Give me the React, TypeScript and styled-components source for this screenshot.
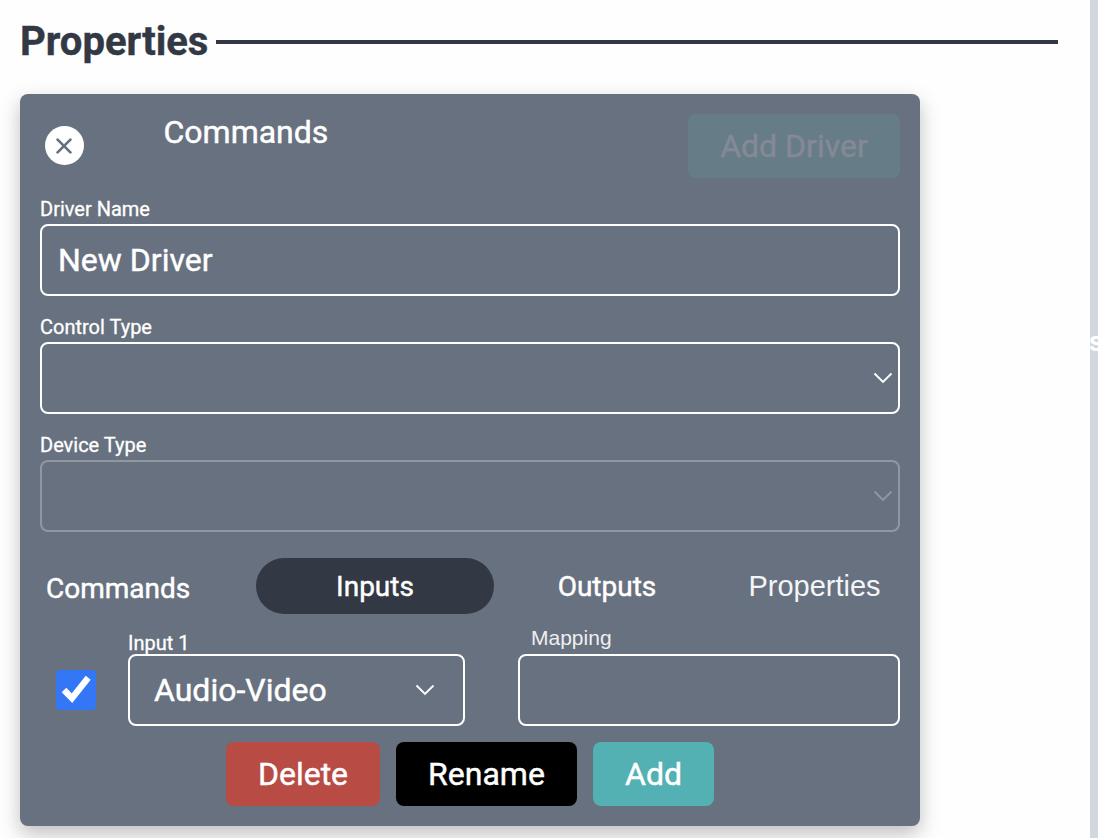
import React from "react";
import styled, { createGlobalStyle, css } from "styled-components";

const roboto = `Roboto, "Liberation Sans", sans-serif`;
const arial = `"Liberation Sans", Arial, sans-serif`;

const GlobalStyle = createGlobalStyle`
  *, *::before, *::after { box-sizing: border-box; }
  body {
    margin: 0;
    overflow: hidden;
    background: #fefefe;
    font-family: ${roboto};
    font-weight: 400;
  }
  button, input { font-family: inherit; margin: 0; }
`;

const Page = styled.div`
  display: flex;
  width: 100vw;
  height: 100vh;
  overflow: hidden;
`;

const Main = styled.main`
  flex: 1;
  min-width: 0;
  padding: 18px 32px 0 20px;
`;

const SidePanel = styled.aside`
  flex: none;
  width: 8px;
  padding-top: 328px;
  overflow: hidden;
  background: #d2d7df;
  color: #fff;
  font: 700 28px/28px ${roboto};
  text-indent: -1px;
  white-space: nowrap;
`;

const Heading = styled.h1`
  display: flex;
  align-items: center;
  gap: 8px;
  height: 48px;
  margin: 0 0 28px;
  color: #323844;
  font-size: 40px;
  font-weight: 700;
  line-height: 48px;
  -webkit-text-stroke: 0.4px currentColor;

  span { width: 188px; white-space: nowrap; }

  &::after {
    content: "";
    flex: 1;
    height: 4px;
    background: #323844;
  }
`;

const Card = styled.section`
  width: 900px;
  height: 732px;
  padding: 20px;
  border-radius: 8px;
  background: #68717f;
  box-shadow: 0 8px 20px rgba(0, 0, 0, 0.25);
  color: #fff;
  -webkit-text-stroke: 0.45px currentColor;
`;

const Header = styled.header`
  display: flex;
  align-items: flex-start;
  height: 64px;
`;

const CloseButton = styled.button`
  display: flex;
  align-items: center;
  justify-content: center;
  width: 39px;
  height: 39px;
  margin: 12px 80px 0 4.5px;
  padding: 0;
  border: 0;
  border-radius: 50%;
  background: #fff;
`;

const Title = styled.h2`
  flex: 1;
  margin: 0;
  font-size: 32px;
  font-weight: 400;
  line-height: 36px;
`;

const Button = styled.button<{ $bg: string; $width: number }>`
  width: ${(p) => p.$width}px;
  height: 64px;
  padding: 0 0 1px;
  border: 0;
  border-radius: 8px;
  background: ${(p) => p.$bg};
  color: #fff;
  font-size: 32px;
  font-weight: 400;
  line-height: 62px;
  white-space: nowrap;
  -webkit-text-stroke: 0.45px currentColor;

  &:disabled { color: #858996; }
`;

const Label = styled.label<{ $arial?: boolean }>`
  display: block;
  font-size: 20px;
  line-height: 24px;
  white-space: nowrap;
  -webkit-text-stroke: 0.3px currentColor;
  ${(p) => p.$arial && css`
    padding-left: 13px;
    font-family: ${arial};
    font-size: 21px;
    color: #eeeff1;
    -webkit-text-stroke: 0;
  `}
`;

const Field = styled.div`
  padding-top: 19px;
  ${Label} { margin-bottom: 3px; }
`;

const boxStyles = css`
  width: 100%;
  height: 72px;
  border: 2px solid #fff;
  border-radius: 8px;
  background: transparent;
  color: #fff;
  font-size: 32px;
`;

const TextInput = styled.input`
  ${boxStyles}
  display: block;
  padding: 0 16px 1px;
  outline: 0;
  -webkit-text-stroke: 0.45px currentColor;
`;

const SelectBox = styled.div<{ $disabled?: boolean; $inset?: boolean }>`
  ${boxStyles}
  display: flex;
  align-items: center;
  justify-content: space-between;
  padding: ${(p) => (p.$inset ? "0 28px 1px 24px" : "0 5px 0 16px")};
  border-color: ${(p) => (p.$disabled ? "#9197a1" : "#fff")};
  color: ${(p) => (p.$disabled ? "#9197a1" : "#fff")};
  svg { margin-left: auto; }
`;

const Tabs = styled.nav`
  display: grid;
  grid-template-columns: 216px 238px 226px 1fr;
  grid-template-rows: 56px;
  height: 56px;
  margin-top: 26px;
`;

const Tab = styled.div<{ $kind?: "first" | "active" | "arial" }>`
  height: 56px;
  font-size: 28px;
  line-height: 57px;
  text-align: center;
  white-space: nowrap;
  ${(p) => p.$kind === "first" && css`
    padding-left: 6px;
    line-height: 61px;
    text-align: left;
  `}
  ${(p) => p.$kind === "active" && css`
    border-radius: 28px;
    background: #323844;
  `}
  ${(p) => p.$kind === "arial" && css`
    padding-left: 9px;
    font-family: ${arial};
    font-size: 29px;
    color: #f4f5f6;
    -webkit-text-stroke: 0;
  `}
`;

const InputRow = styled.div`
  display: grid;
  grid-template-columns: 88px 390px 382px;
  align-items: end;
  height: 112px;
`;

const CheckCell = styled.div`
  padding: 0 0 16px 16px;
`;

const Checkbox = styled.div`
  display: flex;
  width: 40px;
  height: 40px;
  border-radius: 4px;
  background: #3376f6;
`;

const InputCell = styled.div<{ $mapping?: boolean }>`
  width: ${(p) => (p.$mapping ? 382 : 337)}px;
  ${Label} { margin-bottom: ${(p) => (p.$mapping ? 4 : -1)}px; }
`;

const Actions = styled.footer`
  display: flex;
  justify-content: center;
  gap: 16px;
  margin-top: 16px;
`;

const Chevron = () => (
  <svg width="20" height="12" viewBox="0 0 20 12" fill="none" stroke="currentColor" strokeWidth="1.9">
    <path d="M1.5 1.5 10 10l8.5-8.5" />
  </svg>
);

export default function App() {
  return (
    <>
      <GlobalStyle />
      <Page>
        <Main>
          <Heading><span>Properties</span></Heading>
          <Card>
            <Header>
              <CloseButton aria-label="Close">
                <svg width="16" height="16" viewBox="0 0 16 16" stroke="#68717f" strokeWidth="2.7" strokeLinecap="round">
                  <path d="m1.6 1.6 12.8 12.8m0-12.8L1.6 14.4" />
                </svg>
              </CloseButton>
              <Title>Commands</Title>
              <Button $bg="#667d88" $width={212} disabled>Add Driver</Button>
            </Header>
            <Field>
              <Label>Driver Name</Label>
              <TextInput defaultValue="New Driver" />
            </Field>
            <Field>
              <Label>Control Type</Label>
              <SelectBox><Chevron /></SelectBox>
            </Field>
            <Field>
              <Label>Device Type</Label>
              <SelectBox $disabled><Chevron /></SelectBox>
            </Field>
            <Tabs>
              <Tab $kind="first">Commands</Tab>
              <Tab $kind="active">Inputs</Tab>
              <Tab>Outputs</Tab>
              <Tab $kind="arial">Properties</Tab>
            </Tabs>
            <InputRow>
              <CheckCell>
                <Checkbox role="checkbox" aria-checked="true">
                  <svg width="40" height="40" viewBox="0 0 40 40" fill="none" stroke="#fff" strokeWidth="6.4">
                    <path d="m8 20 8 8.2L32.2 7.8" />
                  </svg>
                </Checkbox>
              </CheckCell>
              <InputCell>
                <Label>Input 1</Label>
                <SelectBox $inset><span>Audio-Video</span><Chevron /></SelectBox>
              </InputCell>
              <InputCell $mapping>
                <Label $arial>Mapping</Label>
                <SelectBox />
              </InputCell>
            </InputRow>
            <Actions>
              <Button $bg="#b84b44" $width={154}>Delete</Button>
              <Button $bg="#000" $width={181}>Rename</Button>
              <Button $bg="#53b0b3" $width={121}>Add</Button>
            </Actions>
          </Card>
        </Main>
        <SidePanel>s</SidePanel>
      </Page>
    </>
  );
}
